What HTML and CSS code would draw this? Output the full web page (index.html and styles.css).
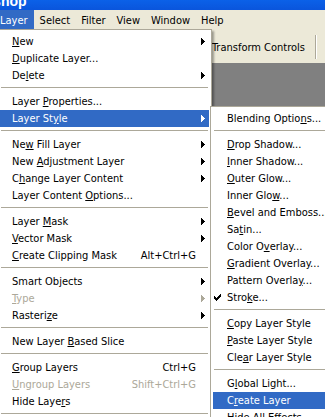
FILE: index.html
```html
<!DOCTYPE html>
<html lang="en">
<head>
  <meta charset="UTF-8" />
  <title>Adobe Photoshop - Layer menu</title>
  <link rel="stylesheet" href="styles.css">
</head>
<body>
  <div class="app">
    <div class="titlebar"><span class="title">Adobe Photoshop</span></div>

    <div class="menubar">
      <span class="menubar-item active">Layer</span>
      <span class="menubar-item">Select</span>
      <span class="menubar-item">Filter</span>
      <span class="menubar-item">View</span>
      <span class="menubar-item">Window</span>
      <span class="menubar-item">Help</span>
    </div>

    <div class="options-bar">
      <div class="options-group">Transform Controls</div>
    </div>

    <div class="workspace"></div>

    <!-- Layer menu -->
    <ul class="menu main-menu">
      <li class="item sub"><span class="label"><u>N</u>ew</span></li>
      <li class="item"><span class="label"><u>D</u>uplicate Layer...</span></li>
      <li class="item sub"><span class="label">De<u>l</u>ete</span></li>
      <li class="sep"></li>
      <li class="item"><span class="label">Layer <u>P</u>roperties...</span></li>
      <li class="item sub selected"><span class="label">Layer St<u>y</u>le</span></li>
      <li class="sep"></li>
      <li class="item sub"><span class="label">Ne<u>w</u> Fill Layer</span></li>
      <li class="item sub"><span class="label">New <u>A</u>djustment Layer</span></li>
      <li class="item sub"><span class="label">C<u>h</u>ange Layer Content</span></li>
      <li class="item"><span class="label">Layer Content <u>O</u>ptions...</span></li>
      <li class="sep"></li>
      <li class="item sub"><span class="label">Layer <u>M</u>ask</span></li>
      <li class="item sub"><span class="label"><u>V</u>ector Mask</span></li>
      <li class="item"><span class="label"><u>C</u>reate Clipping Mask</span><span class="shortcut">Alt+Ctrl+G</span></li>
      <li class="sep"></li>
      <li class="item sub"><span class="label">Smart Objects</span></li>
      <li class="item sub disabled"><span class="label"><u>T</u>ype</span></li>
      <li class="item sub"><span class="label">Rasteri<u>z</u>e</span></li>
      <li class="sep"></li>
      <li class="item"><span class="label">New Layer <u>B</u>ased Slice</span></li>
      <li class="sep"></li>
      <li class="item"><span class="label"><u>G</u>roup Layers</span><span class="shortcut">Ctrl+G</span></li>
      <li class="item disabled"><span class="label"><u>U</u>ngroup Layers</span><span class="shortcut">Shift+Ctrl+G</span></li>
      <li class="item"><span class="label">Hide Laye<u>r</u>s</span></li>
      <li class="sep"></li>
    </ul>

    <!-- Layer Style submenu -->
    <ul class="menu sub-menu">
      <li class="item"><span class="label">Blending Optio<u>n</u>s...</span></li>
      <li class="sep"></li>
      <li class="item"><span class="label"><u>D</u>rop Shadow...</span></li>
      <li class="item"><span class="label"><u>I</u>nner Shadow...</span></li>
      <li class="item"><span class="label"><u>O</u>uter Glow...</span></li>
      <li class="item"><span class="label">Inner Glo<u>w</u>...</span></li>
      <li class="item"><span class="label"><u>B</u>evel and Emboss...</span></li>
      <li class="item"><span class="label">Sa<u>t</u>in...</span></li>
      <li class="item"><span class="label">Color O<u>v</u>erlay...</span></li>
      <li class="item"><span class="label"><u>G</u>radient Overlay...</span></li>
      <li class="item"><span class="label">Pattern Overla<u>y</u>...</span></li>
      <li class="item checked"><span class="label">Stro<u>k</u>e...</span></li>
      <li class="sep"></li>
      <li class="item"><span class="label"><u>C</u>opy Layer Style</span></li>
      <li class="item"><span class="label"><u>P</u>aste Layer Style</span></li>
      <li class="item"><span class="label">Cle<u>a</u>r Layer Style</span></li>
      <li class="sep"></li>
      <li class="item"><span class="label">G<u>l</u>obal Light...</span></li>
      <li class="item selected"><span class="label">C<u>r</u>eate Layer</span></li>
      <li class="item"><span class="label">Hide All Effects</span></li>
    </ul>
  </div>

  <script>
    // submenu arrows and the check mark are tiny pixel glyphs, added here
    const arrow = '<svg class="arrow" width="4" height="7" viewBox="0 0 4 7" shape-rendering="crispEdges">' +
      '<path d="M0 0H1V1H2V2H3V3H4V4H3V5H2V6H1V7H0Z" fill="currentColor"/></svg>';
    const check = '<svg class="check" width="7" height="7" viewBox="0 0 7 7" shape-rendering="crispEdges">' +
      '<path d="M6 0H7V3H6V4H5V5H4V6H3V7H2V6H1V5H0V2H1V3H2V4H3V3H4V2H5V1H6Z" fill="currentColor"/></svg>';

    document.querySelectorAll(".main-menu .item").forEach(item => {
      const slot = document.createElement("span");
      slot.className = "arrow-slot";
      if (item.classList.contains("sub")) slot.innerHTML = arrow;
      item.appendChild(slot);
    });

    document.querySelectorAll(".item.checked").forEach(item => {
      item.insertAdjacentHTML("afterbegin", check);
    });
  </script>
</body>
</html>
```

FILE: styles.css
```css
body {
  margin: 0;
  font-family: "DejaVu Sans Condensed", "Liberation Sans", sans-serif;
  font-size: 11px;
  color: #000000;
  background: #808080;
}

.app {
  position: relative;
  width: 325px;
  height: 417px;
  overflow: hidden;
}

.titlebar {
  height: 10px;
  overflow: hidden;
  background: linear-gradient(to bottom, #0b61e8, #0a55dc);
}

.title {
  display: block;
  margin-top: -7px;
  margin-left: -94px;
  font-family: "Liberation Sans", sans-serif;
  font-weight: bold;
  font-size: 14px;
  line-height: 16px;
  color: #ffffff;
  white-space: nowrap;
}

.menubar {
  display: flex;
  height: 20px;
  background: #ece9d8;
}

.menubar-item {
  display: flex;
  align-items: center;
  padding: 0 5px 0 6px;
}

.menubar-item.active {
  margin-left: -6px;
  padding-right: 6px;
  background: #316ac5;
  color: #ffffff;
}

.options-bar {
  display: flex;
  justify-content: flex-end;
  height: 33px;
  background: #ece9d8;
}

.options-group {
  display: flex;
  align-items: center;
  margin: 5px 9px 4px 0;
  padding-right: 10px;
  border-right: 1px solid #aca899;
  box-shadow: 1px 0 0 #ffffff;
}

.workspace {
  height: 354px;
  background: #808080;
}

/* drop-down menus */
.menu {
  position: absolute;
  margin: 0;
  padding: 3px 2px 2px;
  list-style: none;
  background: #ffffff;
  border: 1px solid #aca899;
  box-shadow: 2px 2px 2px rgba(0, 0, 0, 0.35);
}

.main-menu {
  left: -3px;
  top: 29px;
  width: 209px;
}

.sub-menu {
  left: 210px;
  top: 106px;
  width: 140px;
}

.item {
  position: relative;
  display: flex;
  align-items: center;
  height: 17px;
  padding-left: 12px;
  white-space: nowrap;
}

.sub-menu .item {
  padding-left: 14px;
}

.item u {
  text-decoration-thickness: 1px;
  text-underline-offset: 1px;
}

.label {
  flex: 1;
}

.shortcut {
  margin-left: 10px;
}

.arrow-slot {
  display: flex;
  width: 4px;
  margin: 0 4px 0 5px;
}

.arrow {
  display: block;
}

.check {
  position: absolute;
  left: 1px;
  top: 5px;
}

.item.selected {
  background: #316ac5;
  color: #ffffff;
}

.item.disabled {
  color: #aca899;
}

.sep {
  height: 1px;
  margin: 3px 1px 5px;
  background: #aca899;
}
```
